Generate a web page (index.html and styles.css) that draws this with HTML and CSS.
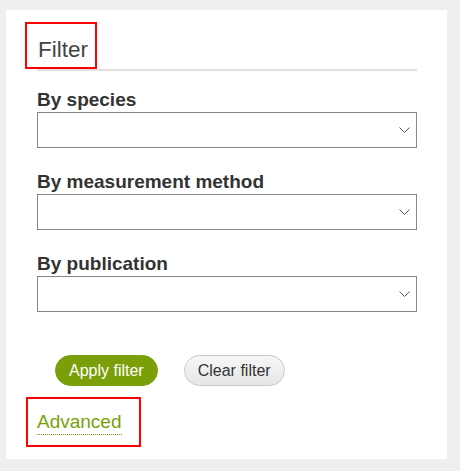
FILE: index.html
```html
<!DOCTYPE html>
<html lang="en">
<head>
<meta charset="utf-8">
<title>Filter</title>
<link rel="stylesheet" href="styles.css">
</head>
<body>
<div class="panel">
  <h2 class="title"><span class="mark mark-title">Filter</span></h2>
  <div class="group">
    <label class="label">By species</label>
    <div class="select"><svg width="11" height="6" viewBox="0 0 11 6"><path d="M0.5 0.5 L5.5 5.5 L10.5 0.5" fill="none" stroke="#555" stroke-width="1"/></svg></div>
  </div>
  <div class="group">
    <label class="label">By measurement method</label>
    <div class="select"><svg width="11" height="6" viewBox="0 0 11 6"><path d="M0.5 0.5 L5.5 5.5 L10.5 0.5" fill="none" stroke="#555" stroke-width="1"/></svg></div>
  </div>
  <div class="group">
    <label class="label">By publication</label>
    <div class="select"><svg width="11" height="6" viewBox="0 0 11 6"><path d="M0.5 0.5 L5.5 5.5 L10.5 0.5" fill="none" stroke="#555" stroke-width="1"/></svg></div>
  </div>
  <div class="actions">
    <button class="btn btn-apply">Apply filter</button>
    <button class="btn btn-clear">Clear filter</button>
  </div>
  <div class="more"><a class="link mark mark-link" href="#">Advanced</a></div>
</div>
</body>
</html>
```
FILE: styles.css
```css
html, body {
  margin: 0;
  padding: 0;
  background: #efefef;
  font-family: "Liberation Sans", Arial, sans-serif;
}
body {
  padding: 10px 0 0 6px;
  height: 471px;
  box-sizing: border-box;
}
.panel {
  width: 441px;
  height: 449px;
  box-sizing: border-box;
  background: #fff;
  padding: 27px 30px 0 31px;
}
.title {
  margin: 0;
  font-size: 22.5px;
  line-height: 26px;
  font-weight: normal;
  color: #444;
  padding-bottom: 6px;
  border-bottom: 2px solid #e0e0e0;
}
.mark {
  position: relative;
  display: inline-block;
}
.mark::after {
  content: "";
  position: absolute;
  border: 2px solid #f00;
  box-sizing: border-box;
}
.mark-title {
  padding-left: 1px;
}
.mark-title::after {
  left: -12px;
  top: -15px;
  width: 72px;
  height: 47px;
}
.group {
  margin-top: 23px;
}
.group:first-of-type {
  margin-top: 18px;
}
.label {
  display: block;
  font-size: 19px;
  line-height: 22px;
  font-weight: bold;
  color: #333;
  margin-bottom: 1px;
}
.select {
  height: 36px;
  box-sizing: border-box;
  border: 1px solid #858585;
  background: #fff;
  display: flex;
  justify-content: flex-end;
  align-items: center;
  padding-right: 6px;
}
.actions {
  margin-top: 43px;
  padding-left: 18px;
  display: flex;
  gap: 26px;
}
.btn {
  height: 31px;
  box-sizing: border-box;
  padding: 0 13px;
  font-family: "Liberation Sans", Arial, sans-serif;
  font-size: 16px;
  line-height: 29px;
  border-radius: 16px;
  border: 1px solid;
  cursor: pointer;
}
.btn-apply {
  background: #7a9f08;
  border-color: #7a9f08;
  color: #fff;
}
.btn-clear {
  background: linear-gradient(#f7f7f7, #e6e6e6);
  border-color: #c8c8c8;
  color: #333;
}
.more {
  margin-top: 25px;
}
.link {
  font-size: 19px;
  line-height: 21px;
  color: #7a9f08;
  text-decoration: none;
  padding-bottom: 2px;
  border-bottom: 1px dotted #7a9f08;
}
.mark-link::after {
  left: -11px;
  top: -14px;
  width: 115px;
  height: 50px;
}
```
